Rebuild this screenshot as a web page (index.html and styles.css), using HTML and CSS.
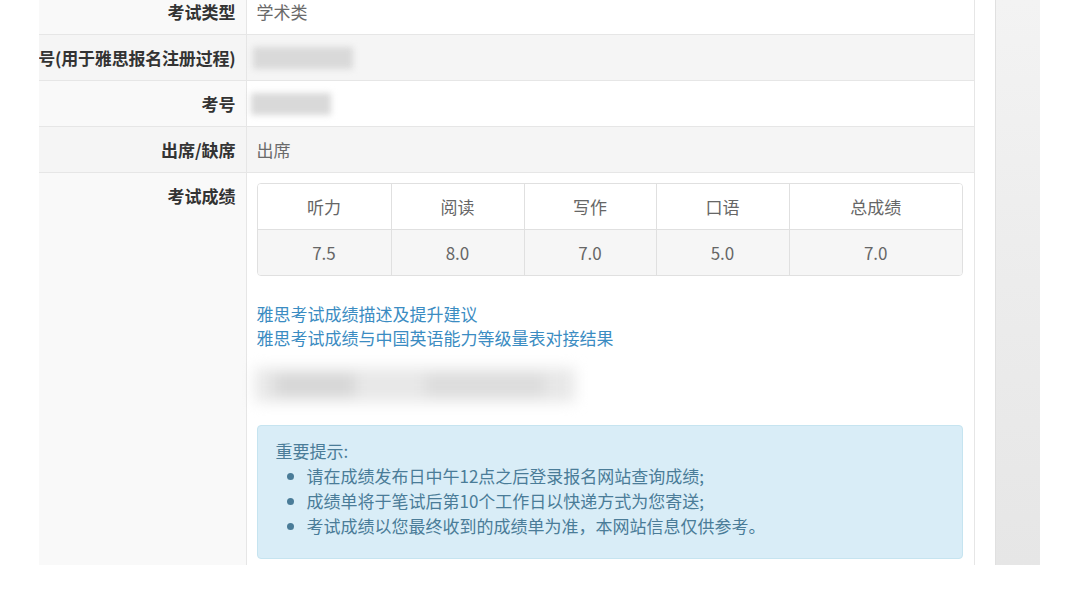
FILE: index.html
```html
<!DOCTYPE html>
<html lang="zh-CN">
<head>
<meta charset="utf-8">
<title>成绩查询</title>
<link rel="stylesheet" href="styles.css">
</head>
<body>
<div class="page">
  <div class="main">
    <table class="info">
      <colgroup><col class="c-label"><col></colgroup>
      <tr>
        <td class="label"><div class="lbl"><span>考试类型</span></div></td>
        <td class="value">学术类</td>
      </tr>
      <tr class="stripe">
        <td class="label wide"><div class="lbl"><span class="tight">号(用于雅思报名注册过程)</span></div></td>
        <td class="value"><span class="redact r1"></span></td>
      </tr>
      <tr>
        <td class="label"><div class="lbl"><span>考号</span></div></td>
        <td class="value"><span class="redact r2"></span></td>
      </tr>
      <tr class="stripe">
        <td class="label"><div class="lbl"><span>出席/缺席</span></div></td>
        <td class="value">出席</td>
      </tr>
      <tr class="last">
        <td class="label"><div class="lbl"><span>考试成绩</span></div></td>
        <td class="value scores-cell">
          <table class="scores">
            <colgroup>
              <col class="s1"><col class="s1"><col class="s2"><col class="s1"><col>
            </colgroup>
            <thead>
              <tr><th>听力</th><th>阅读</th><th>写作</th><th>口语</th><th>总成绩</th></tr>
            </thead>
            <tbody>
              <tr><td>7.5</td><td>8.0</td><td>7.0</td><td>5.0</td><td>7.0</td></tr>
            </tbody>
          </table>
          <div class="links">
            <a href="#">雅思考试成绩描述及提升建议</a>
            <a href="#">雅思考试成绩与中国英语能力等级量表对接结果</a>
          </div>
          <div class="blurred">
            <span class="b b1"></span><span class="b b2"></span><span class="b b3"></span>
          </div>
          <div class="alert">
            <div class="alert-title">重要提示:</div>
            <ul>
              <li>请在成绩发布日中午12点之后登录报名网站查询成绩;</li>
              <li>成绩单将于笔试后第10个工作日以快递方式为您寄送;</li>
              <li>考试成绩以您最终收到的成绩单为准，本网站信息仅供参考。</li>
            </ul>
          </div>
        </td>
      </tr>
    </table>
  </div>
  <div class="side"></div>
</div>
</body>
</html>
```

FILE: styles.css
```css
html, body {
  margin: 0;
  padding: 0;
  background: #ffffff;
}

body {
  font-family: "Noto Sans CJK SC", "Noto Sans", sans-serif;
  font-size: 17px;
  color: #666;
}

.page {
  display: flex;
  height: 565px;
  padding-left: 39px;
}

.main {
  width: 936px;
  height: 565px;
  overflow: hidden;
  border-right: 1px solid #e6e6e6;
  box-sizing: border-box;
}

.side {
  margin-left: 20px;
  width: 45px;
  height: 565px;
  box-sizing: border-box;
  border-left: 1px solid #e0e0e0;
  background: linear-gradient(to bottom, #f3f3f3 0%, #ececec 50%, #e6e6e6 100%);
}

.info {
  width: 100%;
  border-collapse: collapse;
  table-layout: fixed;
  margin-top: -11px;
}

.c-label {
  width: 207px;
}

.info > tbody > tr > td {
  padding: 10px;
  line-height: 25px;
  height: 25px;
  border-top: 1px solid #e6e6e6;
  vertical-align: top;
}

.info > tbody > tr:first-child > td {
  border-top: none;
}

.label {
  background: #f9f9f9;
  border-right: 1px solid #e6e6e6;
  font-weight: bold;
  color: #333;
}

.info > tbody > tr > td.wide {
  padding-left: 0;
}

.lbl {
  display: flex;
  justify-content: flex-end;
  white-space: nowrap;
}

.tight {
  letter-spacing: -0.2px;
}

.stripe > td,
.stripe > .label {
  background: #f5f5f5;
}

.value {
  background: #ffffff;
  color: #6a6a6a;
}

.redact {
  display: block;
  height: 22px;
  margin-top: 2px;
  background: #d9d9d9;
  filter: blur(3px);
}

.r1 {
  width: 100px;
  margin-left: -4px;
}

.r2 {
  width: 80px;
  margin-left: -6px;
}

.scores-cell {
  padding-right: 11px !important;
}

.scores {
  width: 100%;
  border-collapse: separate;
  border-spacing: 0;
  table-layout: fixed;
  border: 1px solid #e0e0e0;
  border-radius: 4px;
  overflow: hidden;
}

.s1 {
  width: 133px;
}

.s2 {
  width: 132px;
}

.scores th,
.scores td {
  padding: 10px;
  line-height: 25px;
  text-align: center;
  font-weight: normal;
  color: #666;
  border-left: 1px solid #e0e0e0;
}

.scores th:first-child,
.scores td:first-child {
  border-left: none;
}

.scores td {
  border-top: 1px solid #e0e0e0;
  background: #f6f6f6;
}

.scores th {
  background: #ffffff;
}

.links {
  margin-top: 26px;
  display: flex;
  flex-direction: column;
}

.links a {
  color: #3b8cc2;
  text-decoration: none;
  line-height: 24px;
}

.blurred {
  position: relative;
  margin: 14px 0 0 -12px;
  height: 44px;
  width: 340px;
  filter: blur(7px);
}

.b {
  position: absolute;
  background: #dcdcdc;
}

.b1 {
  left: 10px;
  top: 4px;
  width: 320px;
  height: 34px;
  background: #e8e8e8;
}

.b2 {
  left: 30px;
  top: 10px;
  width: 80px;
  height: 22px;
  background: #d6d6d6;
}

.b3 {
  left: 180px;
  top: 10px;
  width: 120px;
  height: 22px;
  background: #dcdcdc;
}

.alert {
  margin-top: 17px;
  background: #d9edf7;
  border: 1px solid #c6e4f0;
  border-radius: 4px;
  padding: 12px 18px 20px;
  color: #4a7c98;
  line-height: 25px;
}

.alert ul {
  margin: 0;
  padding-left: 31px;
}
```
